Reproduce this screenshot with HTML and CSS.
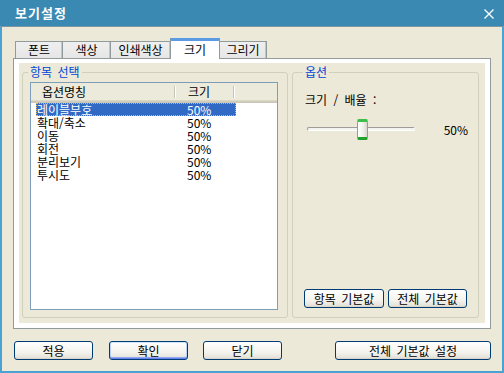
FILE: index.html
```html
<!DOCTYPE html>
<html lang="ko">
<head>
    <meta charset="UTF-8">
    <title>보기설정</title>
    <link rel="stylesheet" href="styles.css">
</head>
<body>
    <div id="view-settings">
        <div class="titlebar">
            <span class="title">보기설정</span>
            <svg class="close" width="10" height="10" viewBox="0 0 10 10">
                <path d="M0.5 0.5L9.5 9.5M9.5 0.5L0.5 9.5" stroke="#fff" stroke-width="1.3" fill="none"/>
            </svg>
        </div>
        <div class="dialog-body">
            <div class="tabs">
                <div class="tab tab-font">폰트</div>
                <div class="tab tab-color">색상</div>
                <div class="tab tab-print">인쇄색상</div>
                <div class="tab tab-size active">크기</div>
                <div class="tab tab-draw">그리기</div>
            </div>
            <div class="panel">
                <div class="page">
                    <fieldset class="group items">
                        <legend>항목 선택</legend>
                        <div class="list">
                            <div class="list-head">
                                <div class="col col-name">옵션명칭</div>
                                <div class="col col-size">크기</div>
                                <div class="col col-rest"></div>
                            </div>
                            <div class="row selected"><span class="name">레이블부호</span><span class="size">50%</span></div>
                            <div class="row"><span class="name">확대/축소</span><span class="size">50%</span></div>
                            <div class="row"><span class="name">이동</span><span class="size">50%</span></div>
                            <div class="row"><span class="name">회전</span><span class="size">50%</span></div>
                            <div class="row"><span class="name">분리보기</span><span class="size">50%</span></div>
                            <div class="row"><span class="name">투시도</span><span class="size">50%</span></div>
                        </div>
                    </fieldset>
                    <fieldset class="group options">
                        <legend>옵션</legend>
                        <div class="opt-label">크기 / 배율 :</div>
                        <div class="slider-row">
                            <div class="slider">
                                <div class="track"></div>
                                <div class="thumb"></div>
                            </div>
                            <span class="slider-value">50%</span>
                        </div>
                        <div class="opt-buttons">
                            <button class="btn btn-item">항목 기본값</button>
                            <button class="btn btn-all">전체 기본값</button>
                        </div>
                    </fieldset>
                </div>
            </div>
            <div class="actions">
                <button class="btn btn-apply">적용</button>
                <button class="btn btn-ok default">확인</button>
                <button class="btn btn-close">닫기</button>
                <button class="btn btn-reset">전체 기본값 설정</button>
            </div>
        </div>
    </div>
</body>
</html>
```

FILE: styles.css
```css
body {
    margin: 0;
    padding: 0;
    font-family: "Noto Sans CJK KR", "Noto Sans", sans-serif;
    font-size: 12px;
    color: #000;
}

#view-settings {
    width: 504px;
    height: 373px;
    display: flex;
    flex-direction: column;
    background-color: #ece9d8;
}

.titlebar {
    height: 27px;
    box-sizing: border-box;
    background-color: #3a89b2;
    border-bottom: 1px solid #7d95a4;
    display: flex;
    align-items: center;
    justify-content: space-between;
    padding: 0 10px 0 15px;
}

.title {
    color: #fff;
    font-weight: bold;
    font-size: 13px;
    letter-spacing: 1px;
    line-height: 16px;
}

.close {
    display: block;
    margin-top: 1px;
}

.dialog-body {
    flex: 1;
    border: 2px solid #4aa2d2;
    border-top: none;
    display: flex;
    flex-direction: column;
}

/* tabs */
.tabs {
    display: flex;
    align-items: flex-end;
    height: 20px;
    margin-top: 11px;
    padding-left: 13px;
    position: relative;
    z-index: 1;
}

.tab {
    height: 17px;
    box-sizing: border-box;
    border: 1px solid #919b9c;
    border-bottom: none;
    background: linear-gradient(#efefef, #e6e6e6);
    box-shadow: inset -1px 0 0 #c4c4c4;
    text-align: center;
    line-height: 15px;
    margin-left: -1px;
}

.tab-font { width: 48px; margin-left: 0; }
.tab-color { width: 49px; }
.tab-print { width: 61px; }
.tab-size { width: 50px; }
.tab-draw { width: 48px; }

.tab.active {
    height: 21px;
    margin-bottom: -1px;
    background: #fff;
    box-shadow: none;
    border-top: 3px solid #5b9be2;
    line-height: 18px;
    position: relative;
    z-index: 2;
}

.panel {
    margin: 0 11px;
    height: 271px;
    box-sizing: border-box;
    border: 1px solid #919b9c;
    background: #fff;
    padding: 4px 5px 5px 5px;
}

.page {
    height: 260px;
    box-sizing: border-box;
    background: #ece9d8;
    display: flex;
    gap: 4px;
    padding: 1px 6px 0 3px;
}

/* group boxes */
.group {
    margin: 0;
    height: 254px;
    box-sizing: border-box;
    border: 1px solid #d0d0bf;
    border-radius: 3px;
    min-width: 0;
}

.group legend {
    color: #0046d5;
    line-height: 16px;
    padding: 0 2px;
    margin-left: -2px;
    word-spacing: 2px;
}

.items {
    width: 266px;
    padding: 2px 7px 0 7px;
}

.options {
    width: 187px;
    padding: 0 10px 9px 12px;
    display: flex;
    flex-direction: column;
}

/* list view */
.list {
    width: 248px;
    height: 228px;
    box-sizing: border-box;
    border: 1px solid #7f9db9;
    background: #fff;
}

.list-head {
    display: flex;
    height: 20px;
    box-sizing: border-box;
    background: linear-gradient(#ebeadb 17px, #e2decd 17px, #d6d2c2 18px, #cbc7b8 19px);
}

.col {
    height: 17px;
    line-height: 17px;
    box-sizing: border-box;
    padding-left: 11px;
    background: linear-gradient(to right, #c7c5b2 1px, #fff 1px) no-repeat right 3px / 2px 12px;
}

.col-name { width: 145px; }
.col-size { width: 59px; padding-left: 12px; }
.col-rest { flex: 1; background: none; }

.row {
    display: flex;
    margin-left: 5px;
    width: 200px;
    height: 13px;
    line-height: 13px;
    box-sizing: border-box;
}

.row .name {
    width: 150px;
    padding-left: 1px;
}

.row.selected {
    background: #316ac5;
    color: #fff;
    outline: 1px dotted #e9b25a;
    outline-offset: -1px;
}

/* options */
.opt-label {
    margin-top: 12px;
    line-height: 16px;
    word-spacing: 3px;
}

.slider-row {
    display: flex;
    align-items: center;
    margin-top: 11px;
    height: 21px;
}

.slider {
    position: relative;
    width: 111px;
    height: 21px;
    margin-left: 2px;
}

.track {
    margin-top: 8px;
    height: 4px;
    box-sizing: border-box;
    border: 1px solid #9d9c99;
    border-bottom-color: #fff;
    border-right-color: #fff;
    border-radius: 2px;
    background: #f3f3ef;
}

.thumb {
    position: absolute;
    left: 50px;
    top: 0;
    width: 11px;
    height: 21px;
    box-sizing: border-box;
    border: 1px solid #9c9b92;
    border-top: 3px solid #3cbf4a;
    border-bottom: 3px solid #21a32b;
    border-radius: 2px;
    background: linear-gradient(to right, #fff, #f0f0ea 60%, #d8d8d0);
}

.slider-value {
    margin-left: 29px;
    line-height: 16px;
}

.opt-buttons {
    margin-top: auto;
    margin-left: -1px;
    display: flex;
    gap: 4px;
}

/* buttons */
.btn {
    height: 19px;
    box-sizing: border-box;
    border: 1px solid #003c74;
    border-radius: 3px;
    background: linear-gradient(#ffffff, #f4f3ee 60%, #e6e4da 90%, #d6d0c5);
    font-family: inherit;
    font-size: 12px;
    line-height: 15px;
    padding: 0;
    color: #000;
    word-spacing: 2px;
}

.btn-item { width: 80px; }
.btn-all { width: 79px; }

.btn.default {
    box-shadow: inset 0 1px 0 #cee7ff, inset 0 -1px 0 #6982ee, inset 1px 0 0 #b9d1fa, inset -1px 0 0 #b9d1fa, inset 0 -2px 0 #91a7f4;
}

.actions {
    display: flex;
    margin-top: 12px;
    padding: 0 11px 0 12px;
}

.btn-apply { width: 79px; }
.btn-ok { width: 79px; margin-left: 16px; }
.btn-close { width: 79px; margin-left: 15px; }
.btn-reset { width: 156px; margin-left: auto; }
```
